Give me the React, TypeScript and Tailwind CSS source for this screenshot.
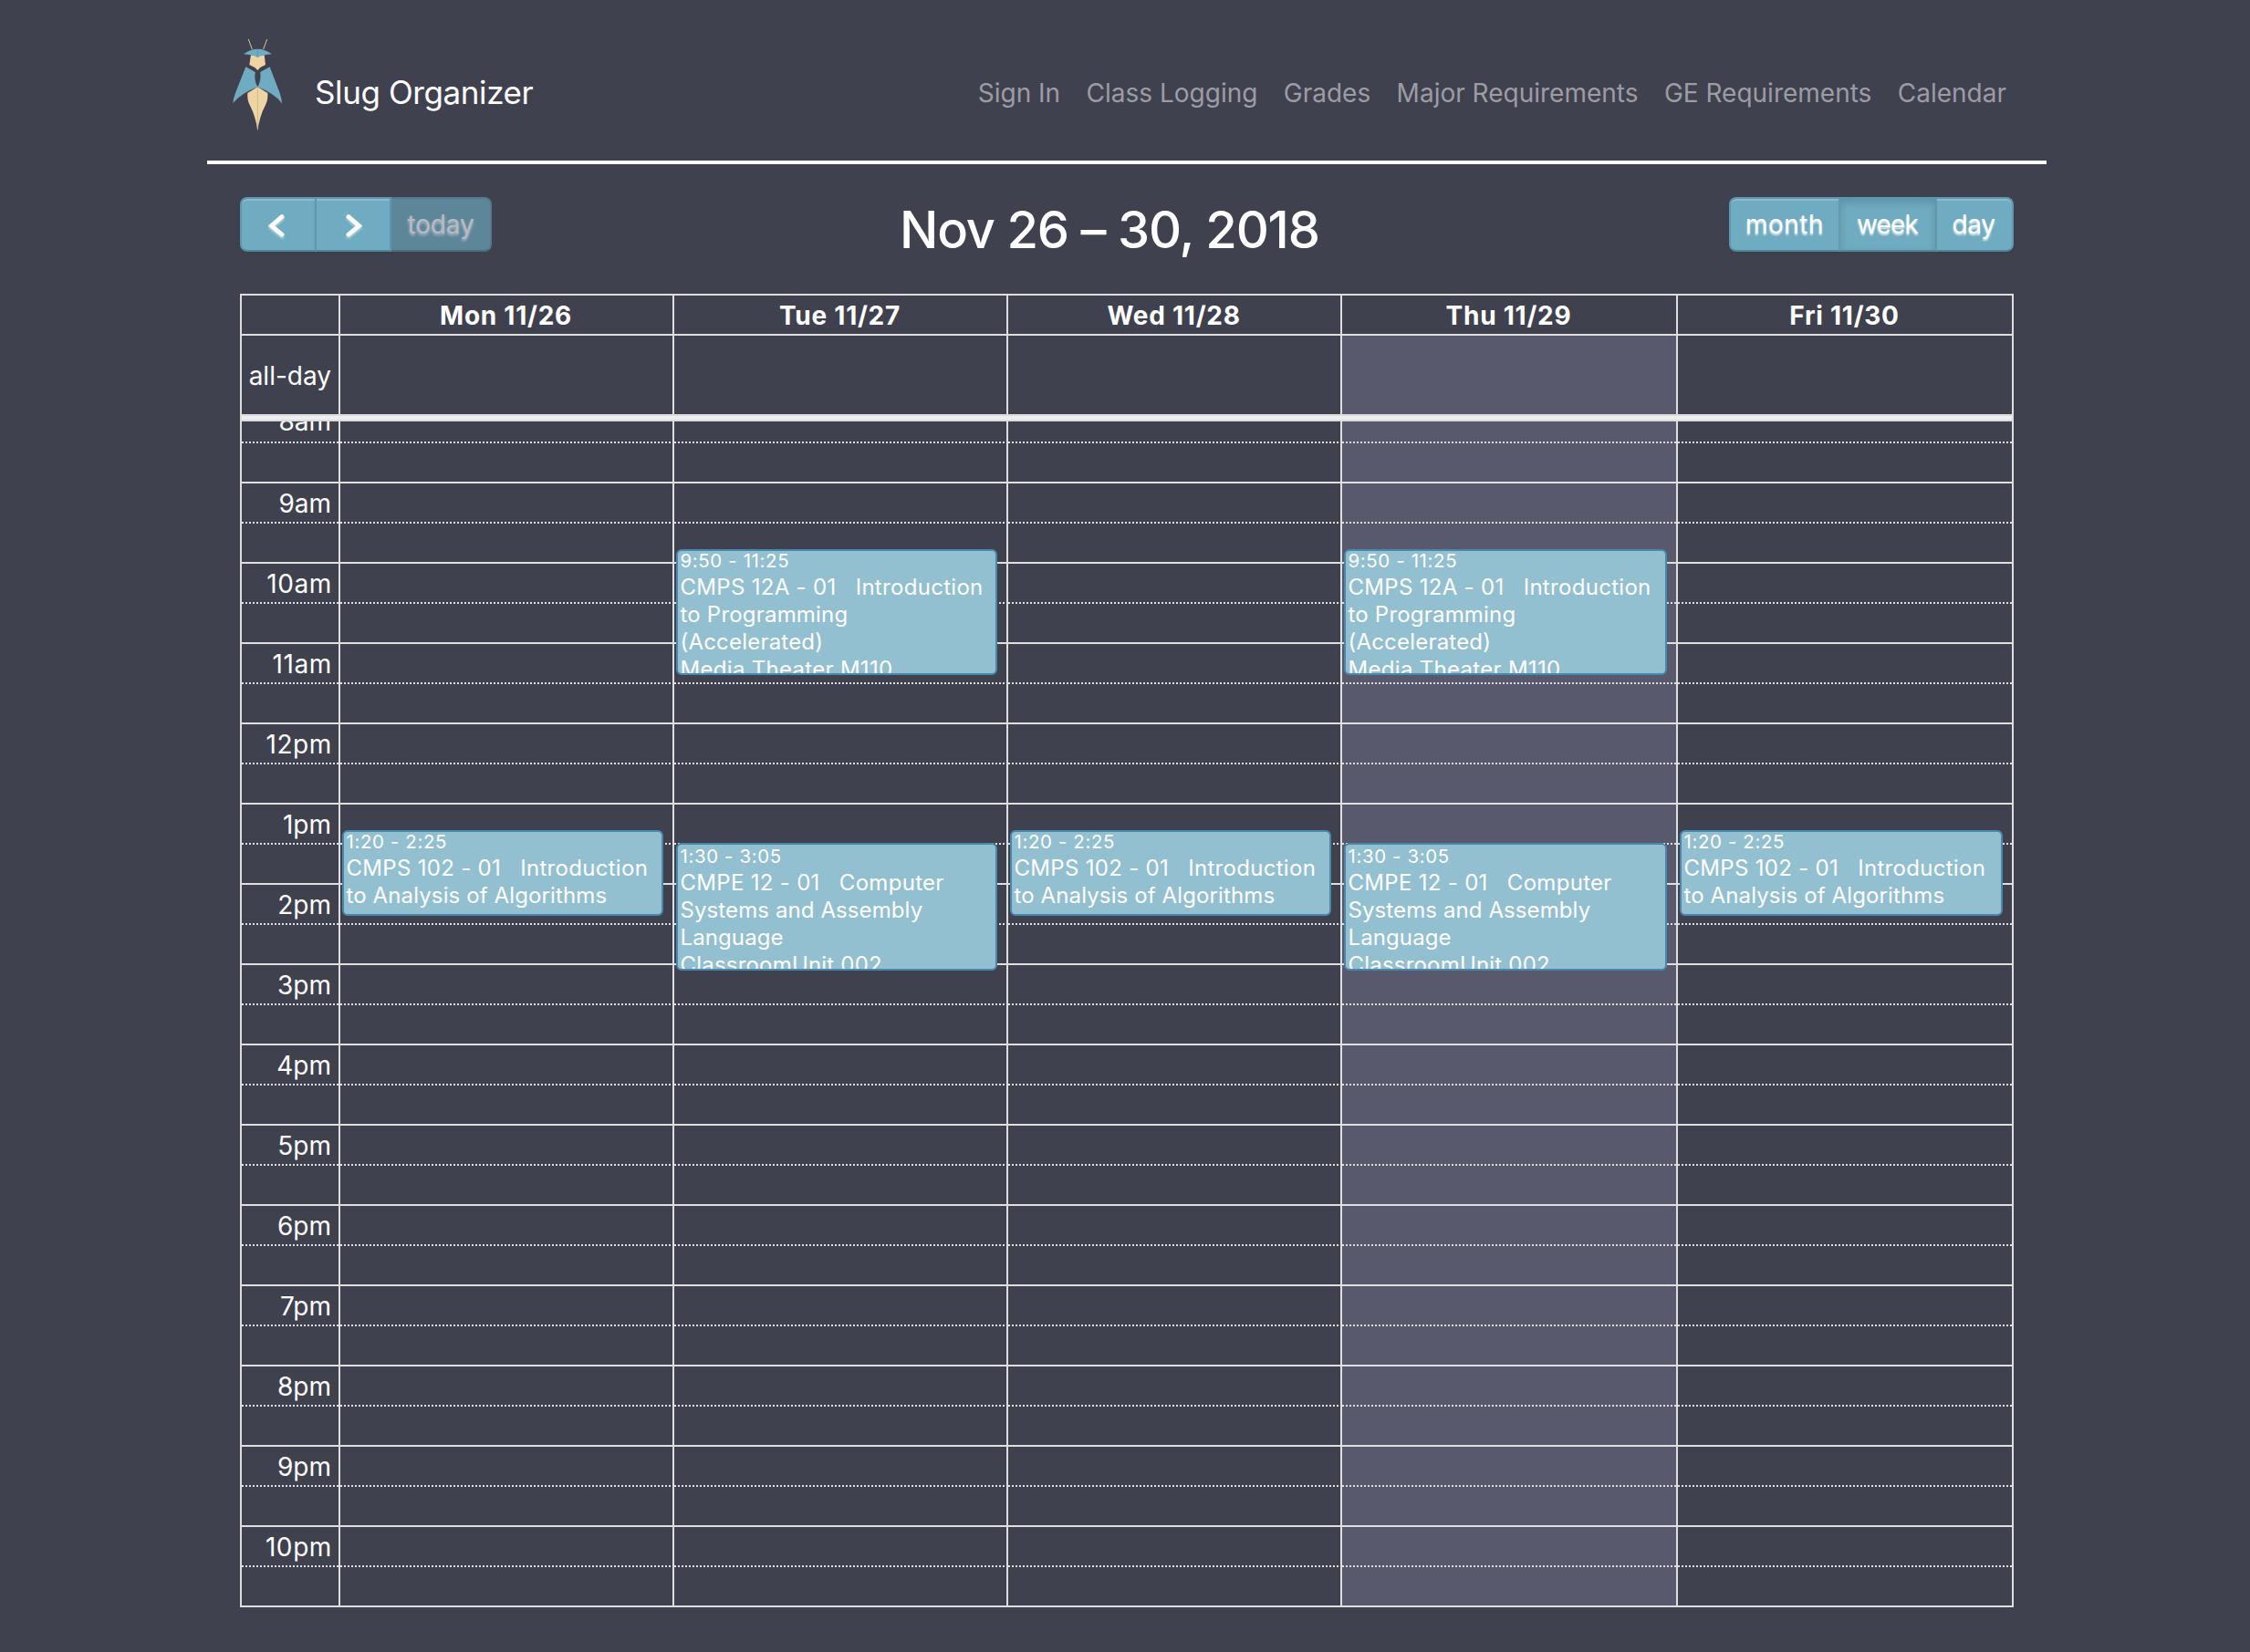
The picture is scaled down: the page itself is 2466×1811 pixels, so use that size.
import React from 'react';

const NAV = ['Sign In', 'Class Logging', 'Grades', 'Major Requirements', 'GE Requirements', 'Calendar'];

const DAYS = ['Mon 11/26', 'Tue 11/27', 'Wed 11/28', 'Thu 11/29', 'Fri 11/30'];
const TODAY = 3;

const HOURS = ['9am', '10am', '11am', '12pm', '1pm', '2pm', '3pm', '4pm', '5pm', '6pm', '7pm', '8pm', '9pm', '10pm'];

const COLS = 'grid grid-cols-[106px_366px_366px_366px_368px_368px]';
const DOTS = 'h-[2px] bg-[repeating-linear-gradient(90deg,#dfdfdf_0_2px,transparent_2px_4px)]';

type Line = { text: string; track: string };
type CalEvent = { top: number; height: number; time: string; pad: string; lines: Line[] };

const cmps12a: CalEvent = {
  top: 140,
  height: 138,
  time: '9:50 - 11:25',
  pad: 'pt-0',
  lines: [
    { text: 'CMPS 12A - 01\u00a0\u00a0 Introduction', track: 'tracking-[0.3px]' },
    { text: 'to Programming', track: 'tracking-[0.2px]' },
    { text: '(Accelerated)', track: 'tracking-[0.2px]' },
    { text: 'Media Theater M110', track: 'tracking-[0.3px]' },
  ],
};
const cmpe12: CalEvent = {
  top: 462,
  height: 140,
  time: '1:30 - 3:05',
  pad: 'pt-[2px]',
  lines: [
    { text: 'CMPE 12 - 01\u00a0\u00a0 Computer', track: 'tracking-[0.3px]' },
    { text: 'Systems and Assembly', track: 'tracking-[0.1px]' },
    { text: 'Language', track: 'tracking-[0.1px]' },
    { text: 'ClassroomUnit 002', track: 'tracking-[0.2px]' },
  ],
};
const cmps102: CalEvent = {
  top: 448,
  height: 94,
  time: '1:20 - 2:25',
  pad: 'pt-0',
  lines: [
    { text: 'CMPS 102 - 01\u00a0\u00a0 Introduction', track: 'tracking-[0.3px]' },
    { text: 'to Analysis of Algorithms', track: 'tracking-[0.12px]' },
  ],
};

const EVENTS: CalEvent[][] = [[cmps102], [cmps12a, cmpe12], [cmps102], [cmps12a, cmpe12], [cmps102]];

function Logo() {
  return (
    <svg className="mt-[35px] h-[115px] w-[100px] shrink-0" viewBox="0 0 300 345" fill="none">
      <path d="M97 24 L109 57 M158 24 L146 57" stroke="#d9c69c" strokeWidth="3" />
      <path d="M105 76 H149 L153 108 Q137 114 127 126 Q116 114 100 108 Z" fill="#efd5a3" />
      <path d="M81 73 Q102 56 127 56 Q152 56 174 73 Q145 75 127 84 Q110 75 81 73 Z" fill="#6fabc1" />
      <path d="M127 57 V84" stroke="#5793a8" strokeWidth="2" />
      <path d="M88 115 L119 132 Q115 160 127 181 Q70 203 46 235 Q47 218 54 201 Z" fill="#6fabc1" />
      <path d="M167 115 L136 132 Q139 160 127 181 Q184 203 207 235 Q206 218 200 201 Z" fill="#6fabc1" />
      <path d="M127 181 L160 201 Q162 222 153 240 Q133 278 127 325 Q121 278 101 240 Q92 222 94 201 Z" fill="#efd5a3" />
      <path d="M127 182 V320" stroke="#c4b493" strokeWidth="2.5" />
    </svg>
  );
}

function Chevron({ d }: { d: string }) {
  return (
    <svg
      className="h-[28px] w-[24px] drop-shadow-[0_2px_1px_rgba(255,255,255,0.5)]"
      viewBox="0 0 24 28"
      fill="none"
      stroke="#fff"
      strokeWidth="4.8"
      strokeLinecap="round"
    >
      <path d={d} />
    </svg>
  );
}

const BTN =
  'flex h-[60px] items-center justify-center border-y-2 border-t-[#5f98ac] border-b-[#52869a] bg-[#6fabc1] text-[28px] leading-[32px] text-white [text-shadow:0_2px_2px_rgba(255,255,255,0.75)]';
const RAISED = 'shadow-[inset_0_2px_0_rgba(255,255,255,0.2),0_2px_4px_rgba(0,0,0,0.05)]';

function EventCard({ ev }: { ev: CalEvent }) {
  return (
    <div
      className={`absolute right-[10px] left-[4px] overflow-hidden rounded-[6px] border-2 border-[#4a87ad] bg-[#93c0d1] pl-[2.5px] whitespace-nowrap text-white ${ev.pad}`}
      style={{ top: ev.top, height: ev.height }}
    >
      <div className="mb-[4px] h-[21px] text-[20.4px] leading-[21px] tracking-[0.65px]">{ev.time}</div>
      {ev.lines.map((l) => (
        <div key={l.text} className={`h-[30px] text-[24px] leading-[30px] ${l.track}`}>
          {l.text}
        </div>
      ))}
    </div>
  );
}

export default function App() {
  return (
    <div className="h-[1811px] w-[2466px] overflow-hidden bg-[#40414f] font-['Inter',sans-serif] text-white">
      <header className="ml-[227px] flex h-[180px] w-[2016px] items-start border-b-4 border-white pl-[13px]">
        <Logo />
        <div className="mt-[81px] ml-[5px] text-[35px] leading-[40px] tracking-[-0.4px]">Slug Organizer</div>
        <nav className="mt-[86px] mr-[44px] ml-auto flex gap-[28.4px] text-[28px] leading-[32px] text-[#9c9ca4]">
          {NAV.map((n) => (
            <a key={n}>{n}</a>
          ))}
        </nav>
      </header>

      <main className="ml-[263px] w-[1944px] pt-[36px]">
        <div className="flex h-[106px] items-start">
          <div className="flex">
            <button className={`${BTN} ${RAISED} w-[82px] rounded-l-[8px] border-l-2 border-l-[#5f98ac] pr-[2px]`}>
              <Chevron d="M17 5.5 L5.5 15.5 L17 25" />
            </button>
            <button className={`${BTN} ${RAISED} w-[84px] border-x-2 border-x-[#5f98ac]`}>
              <Chevron d="M7 5.5 L18.5 15.5 L7 25" />
            </button>
            <button className="flex h-[60px] w-[110px] items-center justify-center rounded-r-[8px] border-y-2 border-r-2 border-t-[#547a8c] border-r-[#547a8c] border-b-[#4c6f80] bg-[#5e8699] text-[28px] leading-[32px] tracking-[-0.2px] text-[#b9bac0] [text-shadow:0_2px_3px_rgba(255,255,255,0.45)]">
              today
            </button>
          </div>
          <h2 className="mt-[4px] ml-[447px] text-[56px] leading-[64px] font-medium tracking-[-1.2px] whitespace-nowrap">
            Nov 26 – 30, 2018
          </h2>
          <div className="ml-auto flex">
            <button className={`${BTN} ${RAISED} w-[120px] rounded-l-[8px] border-l-2 border-l-[#5f98ac] tracking-[0.5px]`}>
              month
            </button>
            <button
              className={`${BTN} w-[108px] border-x-2 border-x-[#629bb0] pr-[1px] tracking-[-0.8px] shadow-[inset_0_4px_8px_rgba(0,0,0,0.15)]`}
            >
              week
            </button>
            <button
              className={`${BTN} ${RAISED} w-[84px] rounded-r-[8px] border-r-2 border-r-[#5f98ac] pr-[2px] tracking-[-0.4px]`}
            >
              day
            </button>
          </div>
        </div>

        <div className="border-2 border-[#dedede]">
          <div className={`${COLS} h-[42px]`}>
            <div />
            {DAYS.map((d) => (
              <div
                key={d}
                className="flex items-center justify-center border-l-2 border-[#dedede] pt-[2px] pr-[1px] text-[28px] leading-[32px] font-bold tracking-[0.75px]"
              >
                {d}
              </div>
            ))}
          </div>
          <div className={`${COLS} h-[88px] border-t-2 border-[#dedede] text-[28px] leading-[32px]`}>
            <div className="flex items-center justify-end pt-[2px] pr-[8px]">all-day</div>
            {DAYS.map((d, i) => (
              <div key={d} className={`border-l-2 border-[#dedede] ${i === TODAY ? 'bg-[#59596d]' : ''}`} />
            ))}
          </div>
          <div className="h-[8px] border-y-2 border-[#dcdce0] bg-[#eeeeee]" />

          <div className="relative h-[1298px] overflow-hidden">
            <div className={`${COLS} absolute inset-0`}>
              <div />
              {DAYS.map((d, i) => (
                <div key={d} className={i === TODAY ? 'bg-[#59596d]' : ''} />
              ))}
            </div>

            <div className="relative text-right text-[28px] leading-[32px]">
              <div className="h-[22px] w-[106px] overflow-hidden pr-[8px]">
                <div className="-mt-[16px]">8am</div>
              </div>
              <div className={`${COLS} h-[44px]`}>
                <div className={DOTS} />
                {DAYS.map((d) => (
                  <div key={d} className="pl-[2px]">
                    <div className={DOTS} />
                  </div>
                ))}
              </div>
              {HOURS.map((h) => (
                <React.Fragment key={h}>
                  <div className="h-[44px] border-t-2 border-[#dfdfdf]">
                    <div
                      className={`w-[106px] pt-[6px] ${h.length === 4 ? 'pr-[7px] tracking-[0.6px]' : 'pr-[8px] tracking-normal'}`}
                    >
                      {h}
                    </div>
                  </div>
                  <div className={`${COLS} h-[44px]`}>
                    <div className={DOTS} />
                    {DAYS.map((d) => (
                      <div key={d} className="pl-[2px]">
                        <div className={DOTS} />
                      </div>
                    ))}
                  </div>
                </React.Fragment>
              ))}
            </div>

            <div className={`${COLS} absolute inset-0`}>
              <div />
              {EVENTS.map((list, i) => (
                <div key={DAYS[i]} className="relative border-l-2 border-[#dedede]">
                  <div className="absolute inset-y-0 right-0 -left-[2px]">
                    {list.map((ev) => (
                      <EventCard key={ev.time} ev={ev} />
                    ))}
                  </div>
                </div>
              ))}
            </div>
          </div>
        </div>
      </main>
    </div>
  );
}
